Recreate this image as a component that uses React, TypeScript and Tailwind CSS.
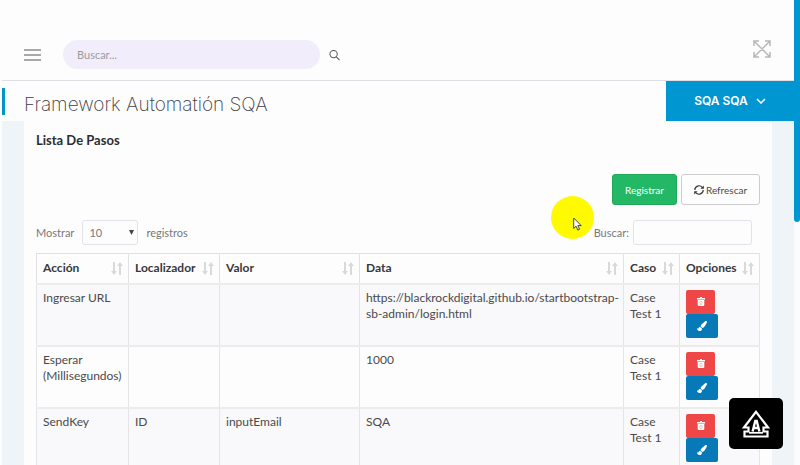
import { FaPaintBrush } from "react-icons/fa";

type Step = {
  action: string;
  locator: string;
  value: string;
  data: string;
  testCase: string;
};

const steps: Step[] = [
  {
    action: "Ingresar URL",
    locator: "",
    value: "",
    data: "https://blackrockdigital.github.io/startbootstrap-sb-admin/login.html",
    testCase: "Case Test 1",
  },
  { action: "Esperar (Millisegundos)", locator: "", value: "", data: "1000", testCase: "Case Test 1" },
  { action: "SendKey", locator: "ID", value: "inputEmail", data: "SQA", testCase: "Case Test 1" },
];

const columns = [
  { label: "Acción", width: "w-[92px]" },
  { label: "Localizador", width: "w-[91px]" },
  { label: "Valor", width: "w-[140px]" },
  { label: "Data", width: "w-auto" },
  { label: "Caso", width: "w-[56px]" },
  { label: "Opciones", width: "w-[80px]" },
];

function SortIcon() {
  return (
    <svg width="12" height="13" viewBox="0 0 12 13" fill="#d9d9dc" aria-hidden="true" className="shrink-0">
      <path d="M2 0h2v9h2L3 13 0 9h2z" />
      <path d="M8 13h2V4h2L9 0 6 4h2z" />
    </svg>
  );
}

function TrashIcon() {
  return (
    <svg width="8" height="9" viewBox="0 0 8 9" aria-hidden="true">
      <path fill="#fff" d="M3 0h2v1h3v1.500H0V1h3zM.7 3h6.600v5q0 1-1 1H1.700q-1 0-1-1z" />
      <path stroke="#f5b9a8" strokeWidth=".8" fill="none" d="M3 4.500h2v2.800H3z" />
    </svg>
  );
}

function RefreshIcon() {
  return (
    <svg width="10" height="10" viewBox="0 0 10 10" fill="none" stroke="#333" strokeWidth="1.2" aria-hidden="true">
      <path d="M.8 5A4.200 4.200 0 0 1 8.200 2.300M9.200 5A4.200 4.200 0 0 1 1.800 7.700" />
      <path fill="#333" stroke="none" d="M9.800.5v3.300H6.500zM.2 9.500V6.200h3.300z" />
    </svg>
  );
}

function ExpandIcon() {
  return (
    <svg width="18" height="18" viewBox="0 0 18 18" fill="none" stroke="#b7b7b9" strokeWidth="1.500" aria-hidden="true">
      <path d="M1 1l16 16M17 1L1 17M1 6V1h5M12 1h5v5M17 12v5h-5M6 17H1v-5" />
    </svg>
  );
}

function UpIcon() {
  return (
    <svg width="30" height="30" viewBox="0 0 30 30" fill="none" stroke="#fff" aria-hidden="true">
      <path strokeWidth="2.2" d="M15 2.800L27 18.500h-4.500V22.500h4V27.500h-23v-5h4v-4H3z" />
      <path strokeWidth="1.800" d="M8 23.800h14" />
      <path strokeWidth="2.400" d="M11.600 22.500L14.300 12h1.400l2.700 10.500M12.500 19h5" />
    </svg>
  );
}

export default function App() {
  return (
    <div className="flex h-screen overflow-hidden bg-[#fefdfe] pl-0.5 font-['Lato','Liberation_Sans',sans-serif] text-xs leading-4 text-[#4a4a4a]">
      <div className="flex min-w-0 flex-1 flex-col">
        <header className="flex h-[81px] shrink-0 items-end border-b border-[#dfdfe5] pr-[23px] pb-[11px] pl-[22px]">
          <button type="button" aria-label="Menú" className="flex h-[29px] w-[17px] flex-col justify-center gap-[3px]">
            <span className="h-0.5 w-full bg-[#a9a9ab]" />
            <span className="h-0.5 w-full bg-[#a9a9ab]" />
            <span className="h-0.5 w-full bg-[#a9a9ab]" />
          </button>
          <input
            type="text"
            aria-label="Buscar en el sitio"
            placeholder="Buscar..."
            className="ml-[22px] h-[29px] w-[257px] rounded-full bg-[#f2edfb] px-[14px] text-[11px] placeholder:text-[#9b9b9e] focus:outline-none"
          />
          <button type="button" aria-label="Iniciar búsqueda" className="ml-[9px] flex h-[29px] items-center">
            <svg width="11" height="12" viewBox="0 0 12 12" fill="none" stroke="#55555a" strokeWidth="1.100" aria-hidden="true">
              <circle cx="5" cy="5" r="4" />
              <path d="M8 8l3.500 3.500" />
            </svg>
          </button>
          <button type="button" aria-label="Pantalla completa" className="mb-[11px] ml-auto">
            <ExpandIcon />
          </button>
        </header>

        <div className="flex h-10 shrink-0 items-stretch justify-between">
          <div className="flex items-center">
            <span className="h-[27px] w-[3px] bg-[#0096c8]" />
            <h1 className="mt-2 ml-[19px] font-['Inter','Liberation_Sans',sans-serif] text-[19px] leading-6 font-extralight text-[#3c3c42]">
              Framework Automatión SQA
            </h1>
          </div>
          <button
            type="button"
            className="flex w-[128px] items-center justify-center gap-2 bg-[#0096d1] font-['Inter','Liberation_Sans',sans-serif] text-xs font-semibold text-white"
          >
            SQA SQA
            <svg width="10" height="6" viewBox="0 0 10 6" fill="none" stroke="white" strokeWidth="1.500" aria-hidden="true">
              <path d="M1 1l4 4 4-4" />
            </svg>
          </button>
        </div>

        <div className="min-h-0 flex-1 overflow-hidden bg-[#eef4f7] px-[22px]">
          <main className="min-h-full bg-[#fefdfe] px-3 pt-[11px]">
            <h2 className="text-[13px] leading-4 font-bold text-[#2d2d2f]">Lista De Pasos</h2>

            <div className="mt-[26px] flex justify-end gap-1">
              <button type="button" className="h-[31px] w-[65px] rounded-[3px] border border-[#1fa855] bg-[#23b865] text-[10px] text-white">
                Registrar
              </button>
              <button
                type="button"
                className="flex h-[31px] w-[79px] items-center justify-center gap-0.5 rounded-[3px] border border-[#ccccd0] text-[10px]"
              >
                <RefreshIcon />
                Refrescar
              </button>
            </div>

            <div className="mt-[15px] flex items-center justify-between pr-2 text-[11px] text-[#77777b]">
              <label className="flex items-center gap-2">
                Mostrar
                <span className="relative">
                  <select
                    defaultValue="10"
                    className="block h-[25px] w-14 appearance-none rounded-[3px] border border-[#e2e2ea] bg-transparent px-[6px] text-[11px]"
                  >
                    <option>10</option>
                    <option>25</option>
                    <option>50</option>
                    <option>100</option>
                  </select>
                  <svg width="5" height="5" viewBox="0 0 5 5" fill="#444" aria-hidden="true" className="pointer-events-none absolute top-[10px] right-1">
                    <path d="M0 0h5L2.500 5z" />
                  </svg>
                </span>
                registros
              </label>
              <label className="flex items-center gap-1">
                Buscar:
                <input type="search" className="h-[25px] w-[119px] rounded-[3px] border border-[#e2e2ea] px-2" />
              </label>
            </div>

            <table className="mt-2 w-full table-fixed border-collapse border border-[#dededf] text-left">
              <thead>
                <tr className="h-[30px]">
                  {columns.map((column) => (
                    <th
                      key={column.label}
                      scope="col"
                      className={`${column.width} border border-[#e2e2e4] pr-[5px] pl-[6px] font-bold text-[#38383a]`}
                    >
                      <span className="flex items-center justify-between">
                        {column.label}
                        <SortIcon />
                      </span>
                    </th>
                  ))}
                </tr>
              </thead>
              <tbody>
                {steps.map((step) => (
                  <tr key={step.action} className="h-[62px] border-t-2 border-[#ececee] align-top odd:bg-[#f9f8fa]">
                    {[step.action, step.locator, step.value, step.data, step.testCase].map((text, index) => (
                      <td key={index} className="border-x border-[#e5e5e7] pt-[5px] pr-1 pl-[6px]">
                        {text}
                      </td>
                    ))}
                    <td className="border-x border-[#e5e5e7] pt-[5px] pl-[6px]">
                      <button type="button" aria-label="Eliminar" className="flex h-6 w-[29px] items-center justify-center rounded-[2px] bg-[#ef4648]">
                        <TrashIcon />
                      </button>
                      <button type="button" aria-label="Editar" className="flex h-6 w-8 items-center justify-center rounded-[2px] bg-[#0879b7] text-[10px] text-white">
                        <FaPaintBrush />
                      </button>
                    </td>
                  </tr>
                ))}
              </tbody>
            </table>
          </main>
        </div>
      </div>

      <div className="w-[6px] shrink-0 bg-[#fbfcfd]">
        <div className="h-[222px] rounded-b-[3px] bg-[#0096d1]" />
      </div>

      <div className="pointer-events-none absolute top-[196px] left-[551px] size-[43px] rounded-full bg-[#fffa00]">
        <svg width="9" height="14" viewBox="0 0 9 14" fill="#fff" stroke="#333" strokeWidth=".9" aria-hidden="true" className="absolute top-[21px] left-[22px]">
          <path d="M.7 1v10.500l2.400-2.300 1.700 3.900 1.700-.8L4.900 8.600h3.300z" />
        </svg>
      </div>

      <button
        type="button"
        aria-label="Volver arriba"
        className="absolute right-[17px] bottom-4 flex h-[51px] w-[54px] items-center justify-center rounded-[5px] bg-black"
      >
        <UpIcon />
      </button>
    </div>
  );
}
